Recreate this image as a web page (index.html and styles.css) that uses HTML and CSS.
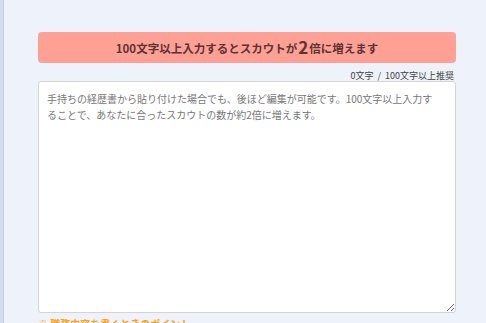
FILE: index.html
```html
<!DOCTYPE html>
<html lang="ja">
<head>
    <meta charset="UTF-8">
    <title>職務経歴</title>
    <link rel="stylesheet" href="styles.css">
</head>
<body>
    <div class="page">
        <div class="content">
            <div class="notice">100文字以上入力するとスカウトが<span class="big">2</span>倍に増えます</div>
            <p class="counter">0文字 / 100文字以上推奨</p>
            <textarea class="career" placeholder="手持ちの経歴書から貼り付けた場合でも、後ほど編集が可能です。100文字以上入力することで、あなたに合ったスカウトの数が約2倍に増えます。"></textarea>
            <p class="hint">※ 職務内容を書くときのポイント</p>
        </div>
    </div>
</body>
</html>
```

FILE: styles.css
```css
* {
    margin: 0;
    padding: 0;
    box-sizing: border-box;
    font-family: "Noto Sans CJK JP", "Noto Sans", sans-serif;
}

body, html {
    height: 100%;
    width: 100%;
    overflow: hidden;
}

body {
    background-color: #eef3fb;
}

.page {
    height: 100%;
    border-left: 3px solid #cddff1;
    display: flex;
}

.page::before {
    content: "";
    width: 1px;
    background-color: #c3d3e3;
}

.content {
    width: 418px;
    margin-left: 34px;
    padding-top: 32px;
}

.notice {
    height: 31px;
    background-color: #ffa095;
    border-radius: 4px;
    display: flex;
    justify-content: center;
    align-items: center;
    color: #5b3434;
    font-size: 11.5px;
    font-weight: bold;
}

.notice .big {
    font-size: 17px;
    line-height: 1;
    margin: 0 1px;
    position: relative;
    top: -1px;
}

.counter {
    text-align: right;
    font-size: 9px;
    color: #444;
    height: 18px;
    line-height: 10px;
    padding-top: 8px;
    padding-right: 2px;
    word-spacing: 2px;
}

.career {
    display: block;
    width: 100%;
    height: 232px;
    border: 1px solid #d4d4d4;
    border-radius: 3px;
    background-color: #fff;
    padding: 9px 16px 8px 8px;
    font-size: 10px;
    line-height: 16px;
    resize: vertical;
}

.career::placeholder {
    color: #777;
}

.hint {
    margin-top: 3px;
    font-size: 10px;
    font-weight: bold;
    color: #f7a21b;
}
```
